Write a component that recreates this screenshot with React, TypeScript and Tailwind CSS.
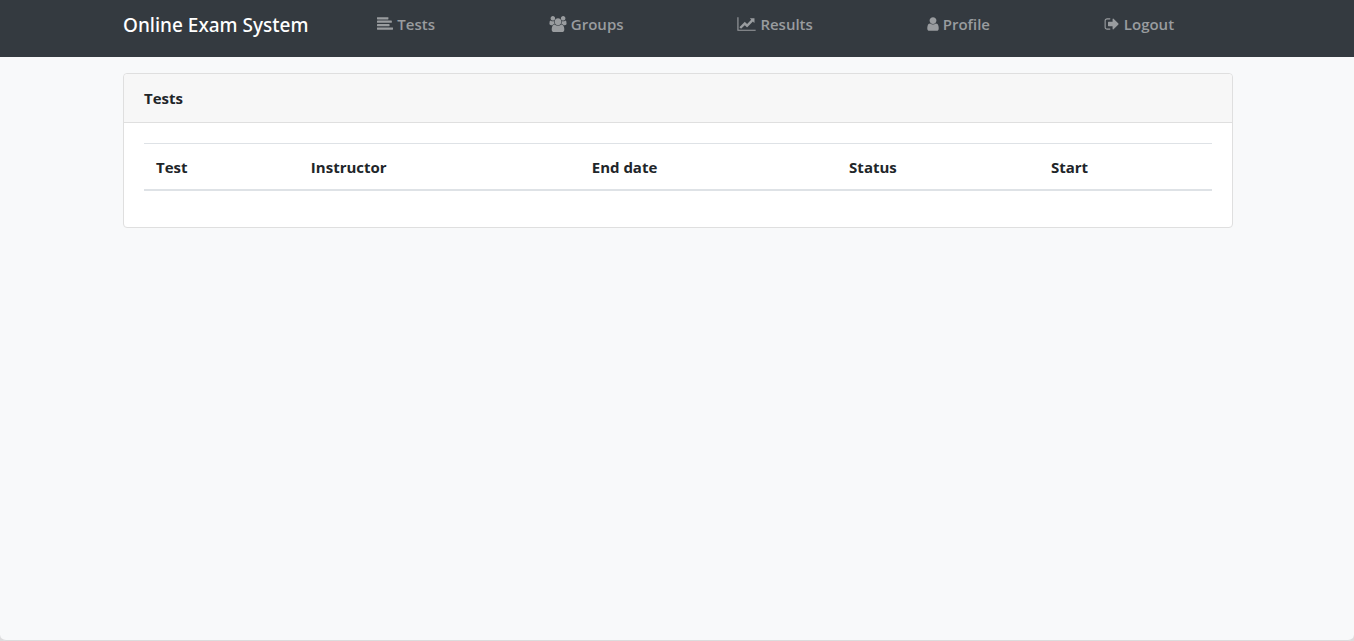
type Icon = { viewBox: string; width: string; path: string };

const links: { label: string; icon: Icon }[] = [
  {
    label: "Tests",
    icon: {
      viewBox: "0 0 1792 1792",
      width: "w-4",
      path: "M1792 1344v128q0 26-19 45t-45 19h-1664q-26 0-45-19t-19-45v-128q0-26 19-45t45-19h1664q26 0 45 19t19 45zm-384-384v128q0 26-19 45t-45 19h-1280q-26 0-45-19t-19-45v-128q0-26 19-45t45-19h1280q26 0 45 19t19 45zm256-384v128q0 26-19 45t-45 19h-1536q-26 0-45-19t-19-45v-128q0-26 19-45t45-19h1536q26 0 45 19t19 45zm-384-384v128q0 26-19 45t-45 19h-1152q-26 0-45-19t-19-45v-128q0-26 19-45t45-19h1152q26 0 45 19t19 45z",
    },
  },
  {
    label: "Groups",
    icon: {
      viewBox: "64 0 1920 1792",
      width: "w-[18px]",
      path: "M657 896q-162 5-265 128h-134q-82 0-138-40.5t-56-118.5q0-353 124-353 6 0 43.5 21t97.5 42.5 119 21.5q67 0 133-23-5 37-5 66 0 139 81 256zm1071 637q0 120-73 189.5t-194 69.5h-874q-121 0-194-69.5t-73-189.5q0-53 3.5-103.5t14-109 26.5-108.5 43-97.5 62-81 85.5-53.5 111.5-20q10 0 43 21.5t73 48 107 48 135 21.5 135-21.5 107-48 73-48 43-21.5q61 0 111.5 20t85.5 53.5 62 81 43 97.5 26.5 108.5 14 109 3.5 103.5zm-1024-1277q0 106-75 181t-181 75-181-75-75-181 75-181 181-75 181 75 75 181zm704 384q0 159-112.5 271.5t-271.5 112.5-271.5-112.5-112.5-271.5 112.5-271.5 271.5-112.5 271.5 112.5 112.5 271.5zm576 225q0 78-56 118.5t-138 40.5h-134q-103-123-265-128 81-117 81-256 0-29-5-66 66 23 133 23 59 0 119-21.5t97.5-42.5 43.5-21q124 0 124 353zm-128-609q0 106-75 181t-181 75-181-75-75-181 75-181 181-75 181 75 75 181z",
    },
  },
  {
    label: "Results",
    icon: {
      viewBox: "0 0 2048 1792",
      width: "w-[19px]",
      path: "M2048 1536v128h-2048v-1536h128v1408h1920zm-128-1248v435q0 21-19.5 29.5t-35.5-7.5l-121-121-633 633q-10 10-23 10t-23-10l-233-233-416 416-192-192 585-585q10-10 23-10t23 10l233 233 464-464-121-121q-16-16-7.5-35.5t29.5-19.5h435q14 0 23 9t9 23z",
    },
  },
  {
    label: "Profile",
    icon: {
      viewBox: "256 0 1280 1792",
      width: "w-3",
      path: "M1536 1399q0 109-62.5 187t-150.5 78h-854q-88 0-150.5-78t-62.5-187q0-85 8.5-160.5t31.5-152 58.5-131 94-89 134.5-34.5q131 128 313 128t313-128q76 0 134.5 34.5t94 89 58.5 131 31.5 152 8.5 160.5zm-256-887q0 159-112.5 271.5t-271.5 112.5-271.5-112.5-112.5-271.5 112.5-271.5 271.5-112.5 271.5 112.5 112.5 271.5z",
    },
  },
  {
    label: "Logout",
    icon: {
      viewBox: "0 0 1664 1792",
      width: "w-4",
      path: "M640 1440q0 4 1 20t.5 26.5-3 23.5-10 19.5-20.5 6.5h-320q-119 0-203.5-84.5t-84.5-203.5v-704q0-119 84.5-203.5t203.5-84.5h320q13 0 22.5 9.5t9.5 22.5q0 4 1 20t.5 26.5-3 23.5-10 19.5-20.5 6.5h-320q-66 0-113 47t-47 113v704q0 66 47 113t113 47h312l11.5 1 11.5 3 8 5.5 7 9 2 13.5zm928-544q0 26-19 45l-544 544q-19 19-45 19t-45-19-19-45v-288h-448q-26 0-45-19t-19-45v-384q0-26 19-45t45-19h448v-288q0-26 19-45t45-19 45 19l544 544q19 19 19 45z",
    },
  },
];

const columns = [
  { title: "Test", width: "w-[14.5%]" },
  { title: "Instructor", width: "w-[26.3%]" },
  { title: "End date", width: "w-[24.1%]" },
  { title: "Status", width: "w-[18.9%]" },
  { title: "Start", width: "w-[16.2%]" },
];

export default function App() {
  return (
    <div className="min-h-screen bg-[#dcdcdd] font-['Open_Sans','Noto_Sans',sans-serif] text-[15px] leading-6 text-[#212529]">
      <div className="flex min-h-screen flex-col rounded-b-md border-b border-[#dcdcdd] bg-[#f8f9fa]">
        <header className="bg-[#343a40]">
          <div className="mx-auto flex h-[57px] max-w-[1140px] items-center gap-3 pr-4 pb-2 pl-4">
            <a href="#" className="font-['Noto_Sans',sans-serif] text-[19px] font-medium whitespace-nowrap text-white">
              Online Exam System
            </a>
            <nav className="flex-1 pb-[2px]">
              <ul className="flex">
                {links.map(({ label, icon }) => (
                  <li key={label} className="flex flex-auto justify-center">
                    <a href="#" className="flex items-center gap-1 font-semibold text-[#999c9f]">
                      <svg
                        viewBox={icon.viewBox}
                        className={`h-4 shrink-0 overflow-visible ${icon.width}`}
                        fill="currentColor"
                        aria-hidden="true"
                      >
                        <path d={icon.path} />
                      </svg>
                      {label}
                    </a>
                  </li>
                ))}
              </ul>
            </nav>
          </div>
        </header>

        <main className="mx-auto w-full max-w-[1140px] py-4 pr-[14px] pl-4">
          <section className="rounded border border-[#dfdfdf] bg-white">
            <h1 className="rounded-t border-b border-[#dfdfdf] bg-[#f7f7f7] px-5 py-3 font-bold">Tests</h1>
            <div className="p-5">
              <table className="mb-4 w-full table-fixed border-collapse text-left">
                <thead>
                  <tr className="border-t border-b-2 border-[#dee2e6]">
                    {columns.map(({ title, width }) => (
                      <th key={title} scope="col" className={`px-3 pt-[11px] pb-[10px] font-bold ${width}`}>
                        {title}
                      </th>
                    ))}
                  </tr>
                </thead>
                <tbody />
              </table>
            </div>
          </section>
        </main>
      </div>
    </div>
  );
}
